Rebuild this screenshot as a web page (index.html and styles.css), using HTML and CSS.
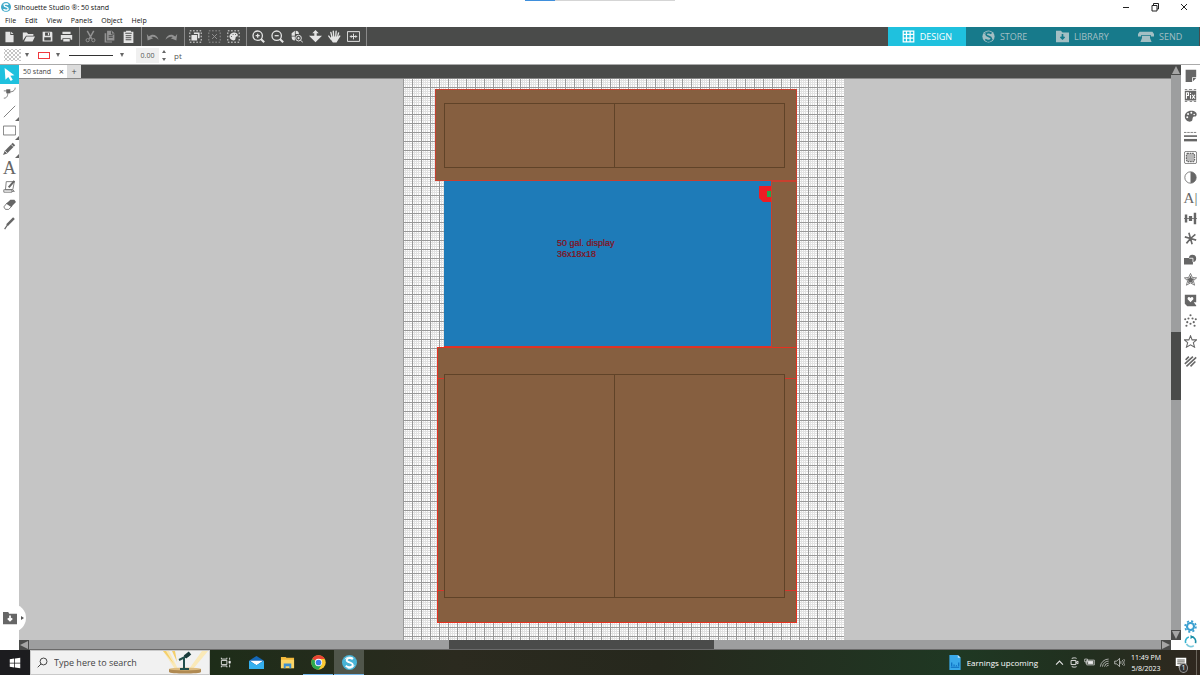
FILE: index.html
```html
<!DOCTYPE html>
<html lang="en">
<head>
  <meta charset="UTF-8">
  <title>Silhouette Studio®: 50 stand</title>
  <link rel="stylesheet" href="styles.css">
</head>
<body>

  <!-- Shared logo -->
  <svg class="defs" width="0" height="0" aria-hidden="true">
    <symbol id="logo" viewBox="0 0 16 16">
      <path d="M11.500 4.500C9.500 2.500 5 3 5 5.500c0 2.700 6.500 2 6.500 5C11.500 13.500 6.500 14 4 11.500" fill="none" stroke-width="2"/>
      <path d="M12 3.500C9 1.500 5 2 3 4.500M13 11c-1 2.500-4 3.500-7 3" fill="none" stroke-width="1"/>
    </symbol>
  </svg>

  <header class="titlebar">
    <svg class="app-logo" viewBox="0 0 16 16"><circle cx="8" cy="8" r="8" fill="#3fa9c9"/><use href="#logo" stroke="#fff"/></svg>
    <h1>Silhouette Studio <sup>®</sup>: 50 stand</h1>
    <div class="load"></div>
    <div class="window-buttons">
      <button aria-label="Minimize"><svg viewBox="0 0 10 10"><path d="M2 5.500h6"/></svg></button>
      <button aria-label="Restore"><svg viewBox="0 0 10 10"><path d="M2 3.500h5V9H2zM3.500 3.500v-2h5V7H7"/></svg></button>
      <button aria-label="Close"><svg viewBox="0 0 10 10"><path d="M2 2l6 6M8 2L2 8"/></svg></button>
    </div>
  </header>

  <nav class="menubar">
    <button>File</button>
    <button>Edit</button>
    <button>View</button>
    <button>Panels</button>
    <button>Object</button>
    <button>Help</button>
  </nav>

  <!-- Main toolbar -->
  <div class="toolbar">
    <div class="group">
      <button aria-label="New"><svg viewBox="0 0 16 16"><path class="f" d="M3 2h6v4h4v9H3zM10 2l3 3h-3z"/></svg></button>
      <button aria-label="Open"><svg viewBox="0 0 16 16"><path class="f" d="M1 13V3h5l1.500 2H14v2H5zM5.500 8H16l-3 6H2.500z"/></svg></button>
      <button aria-label="Save"><svg viewBox="0 0 16 16"><path class="f" fill-rule="evenodd" d="M2 2h11l1 1v11H2zM5 3v4h6V3zM4 9v4h8V9z"/><path class="f" d="M8.500 3.500h1.500v3H8.500z"/></svg></button>
      <button aria-label="Print"><svg viewBox="0 0 16 16"><path class="f" fill-rule="evenodd" d="M3 2h10v3H3zM1 6h14v6h-2v-2H3v2H1zM4 11h8v3H4z"/></svg></button>
    </div>
    <div class="group">
      <button class="dim" aria-label="Cut"><svg viewBox="0 0 16 16"><path d="M4 1l5.500 10M12 1L6.500 11" stroke-width="1.800"/><circle cx="4.500" cy="12.500" r="2"/><circle cx="11.500" cy="12.500" r="2"/></svg></button>
      <button class="dim" aria-label="Copy"><svg viewBox="0 0 16 16"><path class="f" d="M5 1h6l3 3v9H5zM2 4h2v10h7v1.500H2z"/><path d="M7 7h5M7 9h5M10.500 1.500V5H14" stroke="#4a4b4a"/></svg></button>
      <button aria-label="Paste"><svg viewBox="0 0 16 16"><path class="f" d="M2 2h3v-1h6v1h3v14H2z"/><path d="M4 4h8M4.500 7h7M4.500 9.500h7M4.500 12h7" stroke="#4a4b4a"/></svg></button>
    </div>
    <div class="group">
      <button class="dim" aria-label="Undo"><svg viewBox="0 0 16 16"><path class="f" d="M1 5l1 8 7-3-2.500-1C9 7.500 12 9 15.500 12 13.500 6 8 4 3.500 8z"/></svg></button>
      <button class="dim" aria-label="Redo"><svg viewBox="0 0 16 16"><path class="f" d="M15 5l-1 8-7-3 2.500-1C7 7.500 4 9 .5 12 2.500 6 8 4 12.500 8z"/></svg></button>
    </div>
    <div class="group">
      <button aria-label="Select all"><svg viewBox="0 0 16 16"><path d="M1 1h14v14H1z" stroke-dasharray="2 2"/><path class="f" d="M6 3h7v7h-2V5H6zM3 6h7v7H3z"/></svg></button>
      <button class="dim" aria-label="Deselect all"><svg viewBox="0 0 16 16"><path d="M1 1h14v14H1z" stroke-dasharray="2 2"/><path d="M5 5l6 6M11 5l-6 6"/></svg></button>
      <button aria-label="Select by color"><svg viewBox="0 0 16 16"><path d="M1 1h14v14H1z" stroke-dasharray="2 2"/><path class="f" d="M9 3c5 0 5 5 3 5-2 0-1 2-2 4-2 2-7 0-7-4 0-3 3-5 6-5z"/><path d="M5 8h1M7 5.500h1M10 5.500h1" stroke="#4a4b4a"/></svg></button>
    </div>
    <div class="group view">
      <button aria-label="Zoom in"><svg viewBox="0 0 16 16"><g stroke-width="1.600"><circle cx="7" cy="7" r="5.800"/><path d="M4.500 7h5M7 4.500v5"/><path d="M11 11l4 4" stroke-width="2.500"/></g></svg></button>
      <button aria-label="Zoom out"><svg viewBox="0 0 16 16"><g stroke-width="1.600"><circle cx="7" cy="7" r="5.800"/><path d="M4.500 7h5"/><path d="M11 11l4 4" stroke-width="2.500"/></g></svg></button>
      <button aria-label="Drag zoom"><svg viewBox="0 0 16 16"><path class="f" d="M2 7V4l4-3v6zM7 1c3 0 4 2 4 4H7zM2 8h4v5C3 13 2 11 2 8z"/><circle cx="10.500" cy="10" r="3.500"/><path d="M9 10h3M10.500 8.500v3M13 12.500l3 3"/></svg></button>
      <button aria-label="Pan"><svg viewBox="0 0 16 16"><path class="f" d="M8 0l4 4H9.500v3H16l-8 8-8-8h6.500V4H4z"/></svg></button>
      <button aria-label="Hand"><svg viewBox="0 0 16 16"><path d="M5 9L3.500 3M7 8l-.5-6.500M9.500 8l.5-6.500M11.500 9L13 3.500M3.500 11L1 7.500" stroke-width="1.700" stroke-linecap="round"/><path class="f" d="M4 8h8.500l2-1.500 1 1-3 4.500-2 3.500H6L3 11z"/></svg></button>
      <button aria-label="Fit to page"><svg viewBox="0 0 16 16"><path d="M.5 2h15v12H.5zM4 8h8M8 4.500v7M5.500 6.500L4 8l1.500 1.500M10.500 6.500L12 8l-1.500 1.500" /></svg></button>
    </div>
    <nav class="modes">
      <button class="mode current"><svg viewBox="0 0 16 16"><path d="M1.500 1.500h13v13h-13zM5.500 1v14M10 1v14M1 5.500h14M1 10h14" stroke-width="1.500"/></svg>DESIGN</button>
      <button class="mode"><svg viewBox="0 0 16 16"><circle class="f" cx="8" cy="8" r="7.500"/><use href="#logo" stroke="#177a8b"/></svg>STORE</button>
      <button class="mode"><svg viewBox="0 0 16 16"><path class="f" d="M0 1h6l2 2h8v12H0z"/><path d="M8 5v6M5.500 8.500L8 11l2.500-2.500" stroke="#177a8b" stroke-width="2"/></svg>LIBRARY</button>
      <button class="mode wide"><svg viewBox="0 0 20 16"><path class="f" d="M2 2h16l2 3v3h-4V6H4v2H0V5zM5 7h10v3l2 5H3l2-5z"/></svg>SEND</button>
    </nav>
  </div>

  <!-- Fill and line options -->
  <div class="options">
    <button class="drop" aria-label="Fill color">
      <svg width="17" height="12" viewBox="0 0 17 12"><defs><pattern id="hatch" width="4" height="4" patternUnits="userSpaceOnUse"><path d="M0 0l4 4M4 0L0 4" stroke="#c4c4c4" stroke-width="1"/></pattern></defs><rect width="17" height="12" fill="url(#hatch)"/></svg>
      <i></i>
    </button>
    <button class="drop" aria-label="Line color">
      <span class="line-color"></span>
      <i></i>
    </button>
    <button class="drop style" aria-label="Line style">
      <span class="line-style"></span>
      <i></i>
    </button>
    <input class="thickness" id="thickness" type="text" value="0.00">
    <span class="spinner"><b></b><i></i></span>
    <label for="thickness">pt</label>
  </div>

  <main class="main">
    <aside class="tools">
      <div class="tool-list">
        <button class="selected" aria-label="Select"><svg viewBox="0 0 16 16"><path d="M2 0l12 9-5 .5 3 5-2.500 1.500L6.500 11 3 14.500z" fill="#fff"/></svg></button>
        <button aria-label="Edit points"><svg viewBox="0 0 16 16"><path d="M1 15c4 0 5-3 5-8 5 1 9-1 9-5M1 6h5"/><path class="f" d="M4 4h5v5H4z"/></svg></button>
        <button class="more" aria-label="Line"><svg viewBox="0 0 16 16"><path d="M1 15L15 1"/></svg></button>
        <button class="more" aria-label="Rectangle"><svg viewBox="0 0 16 16"><path d="M.5 2.500h15v11H.5z"/></svg></button>
        <button class="more" aria-label="Draw"><svg viewBox="0 0 16 16"><path class="f" d="M0 16l2-5L12 1l3 3L5 14z"/><path d="M2.500 11l3 3M10 3l3 3" stroke="#fff"/></svg></button>
        <button class="letter" aria-label="Text">A</button>
        <button aria-label="Sketch"><svg viewBox="0 0 16 16"><path d="M4 2h10l-2 10H3zM1 12h10v3H1zM12 12l2 2H11"/><path d="M7 9l7-8" stroke-width="2.500"/></svg></button>
        <button aria-label="Eraser"><svg viewBox="0 0 16 16"><path d="M1 11l4-5 6 4-4 4H3z"/><path class="f" d="M4 7l5-5h5l2 3-6 6z"/></svg></button>
        <button aria-label="Knife"><svg viewBox="0 0 16 16"><path d="M2 15l4-6" stroke-width="1.500"/><path d="M5 10l8.500-8.500" stroke-width="3"/></svg></button>
      </div>
    </aside>

    <section class="workspace">
      <div class="tabs">
        <div class="tab">50 stand<button aria-label="Close tab">×</button></div>
        <button class="tab-new" aria-label="New tab">+</button>
      </div>

      <div class="canvas">
        <svg class="page" width="441" height="561" viewBox="0 0 441 561">
          <defs>
            <pattern id="grid" y="8" width="9" height="9" patternUnits="userSpaceOnUse">
              <rect width="9" height="9" fill="#fff"/>
              <path d="M2.500 0v9M4.500 0v9M6.500 0v9M0 2.500h9M0 4.500h9M0 6.500h9" stroke="#e2e2e2"/>
              <path d="M.5 0v9M0 .5h9" stroke="#999"/>
            </pattern>
          </defs>
          <rect width="441" height="561" fill="url(#grid)"/>
          <!-- tank -->
          <rect x="41" y="102" width="327" height="165" fill="#1e7bb8"/>
          <path d="M356 107h12v16h-8l-4-4z" fill="#ed1c24"/>
          <rect x="364" y="112" width="4" height="6" fill="#22a651"/>
          <text x="154" y="167">50 gal. display</text>
          <text x="154" y="178">36x18x18</text>
          <!-- canopy -->
          <rect class="wood" x="368.500" y="102.500" width="25" height="166"/>
          <rect class="wood" x="32.500" y="10.500" width="361" height="91"/>
          <rect class="door" x="41.500" y="24.500" width="340" height="64"/>
          <path class="door" d="M211.500 24v64"/>
          <path class="red" d="M41 267.500h327"/>
          <!-- stand -->
          <rect class="wood strong" x="34.500" y="268.500" width="359" height="275"/>
          <path class="red" d="M35 299.500h6M382 299.500h12M35 511.500h6M382 511.500h12"/>
          <rect class="door" x="41.500" y="295.500" width="340" height="223"/>
          <path class="door" d="M211.500 295v223"/>
        </svg>
        <button class="drawer" aria-label="Library">
          <svg viewBox="0 0 16 16"><path d="M0 1h6l1 2h9v12H0z" fill="#666"/><path d="M8 5v6M5.500 8.500L8 11l2.500-2.500" stroke="#fff" stroke-width="2"/></svg>
          <i></i>
        </button>
      </div>

      <div class="hscroll"><i class="left"></i><div class="thumb"></div><i class="right"></i></div>
    </section>

    <div class="vscroll"><i class="up"></i><div class="thumb"></div><i class="down"></i></div>

    <aside class="panels">
      <div class="panel-list">
        <button aria-label="Page setup"><svg viewBox="0 0 16 16"><path class="f" d="M2 1h13v9h-5v6H2zM11 11h4l-4 4z"/></svg></button>
        <button aria-label="PixScan"><svg viewBox="0 0 16 16"><path class="f" d="M1 2h14v12H1zM1 0h3v1H1zM6 0h4v1H6zM12 0h3v1h-3zM1 15h3v1H1zM7 15h3v1H7zM12 15h3v1h-3z"/><path d="M3 12V4.500h2.500v3.500H3M8 7.500V12M8 4.500v1.500M10 7l3.500 5M13.500 7L10 12" stroke="#fff" stroke-width="1.300"/></svg></button>
        <button aria-label="Fill"><svg viewBox="0 0 16 16"><path class="f" d="M9 1c8 0 8 7 4 7-3 0-2 3-3 5-2 3-9 1-9-5 0-4 3-7 8-7z"/><g fill="#fff" stroke="none"><circle cx="4" cy="9" r="1.200"/><circle cx="5" cy="5" r="1.200"/><circle cx="9" cy="3.500" r="1.200"/><circle cx="12.500" cy="5.500" r="1"/></g></svg></button>
        <button aria-label="Line style"><svg viewBox="0 0 16 16"><path d="M0 3h16" stroke-dasharray="3 1"/><path d="M0 7.500h16" stroke-width="2"/><path d="M0 12.500h16" stroke-width="3"/></svg></button>
        <button aria-label="Trace"><svg viewBox="0 0 16 16"><rect x=".5" y=".5" width="15" height="15" rx="2"/><path d="M4 3h8l1 2v6l-1 2H4l-1-2V5z" fill="#b9b9b9" stroke-width="1.500" stroke-dasharray="2 1"/></svg></button>
        <button aria-label="Image effects"><svg viewBox="0 0 16 16"><circle cx="8" cy="8" r="7"/><path class="f" d="M8 1a7 7 0 0 1 0 14z"/></svg></button>
        <button class="letter small" aria-label="Text style">A|</button>
        <button aria-label="Align"><svg viewBox="0 0 16 16"><path d="M0 8h16"/><path class="f" d="M1 3h3v10H1zM6 5h4v6H6zM12 1h3v14h-3z"/></svg></button>
        <button aria-label="Replicate"><svg viewBox="0 0 16 16"><path d="M8 8L6 1M8 8l6-5M8 8l7 2M8 8l2 7M8 8l-5 6M8 8L1 6" stroke-width="2"/><circle class="f" cx="8" cy="8" r="2"/></svg></button>
        <button aria-label="Modify"><svg viewBox="0 0 16 16"><path class="f" d="M0 6h6a4.500 4.500 0 1 1 5 5v3H0z"/><path d="M6.500 6.500H11V11" stroke="#fff"/></svg></button>
        <button aria-label="Offset"><svg viewBox="0 0 16 16"><path d="M8 .5l2.300 5 5.200.5-4 3.500L13 15l-5-2.800L3 15l1.500-5.500L.5 6l5.200-.5z"/><path class="f" d="M8 3l1.500 3.500 3.500.5-2.500 2.500.5 3.500-3-2-3 2 .5-3.500L3 7l3.500-.5z"/></svg></button>
        <button aria-label="Stipple"><svg viewBox="0 0 16 16"><path class="f" d="M1 1h14v9h-3l3 4v1H4l-3-3z"/><path d="M8 10L4.500 6.500C4 3 7 3 8 5c1-2 4-2 3.500 1.500z" fill="#fff" stroke="none"/></svg></button>
        <button aria-label="Rhinestones"><svg viewBox="0 0 16 16"><g class="f"><circle cx="8" cy="1.500" r="1.300"/><circle cx="5.500" cy="5.500" r="1.300"/><circle cx="10.500" cy="5.500" r="1.300"/><circle cx="1.500" cy="6.500" r="1.300"/><circle cx="14.500" cy="6.500" r="1.300"/><circle cx="4" cy="10" r="1.300"/><circle cx="12" cy="10" r="1.300"/><circle cx="8" cy="12" r="1.300"/><circle cx="3" cy="14.500" r="1.300"/><circle cx="13" cy="14.500" r="1.300"/></g></svg></button>
        <button aria-label="Sketch"><svg viewBox="0 0 16 16"><path d="M8 1l2 5h5.500l-4 3.500 1.500 5.500-5-3-5 3 1.500-5.500L.5 6H6z" stroke-width="1.300"/></svg></button>
        <button aria-label="Hatch"><svg viewBox="0 0 16 16"><path d="M2 6l4-4M1 11l10-9M3 14L15 3M8 14l6-6" stroke-width="1.900"/></svg></button>
      </div>
      <div class="panel-foot">
        <button aria-label="Preferences"><svg viewBox="0 0 16 16"><circle cx="8" cy="8" r="4.300" stroke="#3a9fd0" stroke-width="2.600"/><circle cx="8" cy="8" r="6.700" stroke="#3a9fd0" stroke-width="2" stroke-dasharray="2.600 2.660"/></svg></button>
        <button aria-label="Sync"><svg viewBox="0 0 16 16"><path d="M9 2a6 6 0 0 1 5 8" stroke="#1b8fa8" stroke-width="2"/><path d="M12 13a6 6 0 0 1-9-2" stroke="#7cc9dc" stroke-width="2"/><path d="M2 10a6 6 0 0 1 4-7.500" stroke="#35b3d0" stroke-width="2"/><path d="M8 0l4 2.500L8 5z" fill="#1b8fa8" stroke="none"/></svg></button>
      </div>
    </aside>
  </main>

  <footer class="taskbar">
    <button class="start" aria-label="Start"><svg viewBox="0 0 16 16"><path d="M1 3l6-1v5.500H1zM8 2l7-1v6.500H8zM1 8.500h6V14l-6-1zM8 8.500h7V15l-7-1z" fill="#fff"/></svg></button>
    <label class="search">
      <svg class="lens" viewBox="0 0 16 16"><circle cx="9.500" cy="6.500" r="5"/><path d="M6 10l-5 5"/></svg>
      <input type="text" placeholder="Type here to search" aria-label="Search">
      <svg class="doodle" width="46" height="23" viewBox="0 0 46 23">
        <path d="M0 0h6l9 18h-3zM39 0h6L30 18h-4z" fill="#fae9b8"/><path d="M0 0h3l8 13zM9 0h3l2 11z" fill="#f4cf6a"/>
        <path d="M6 18h32v3c0 2-32 2-32 0z" fill="#b08a52"/><ellipse cx="22" cy="18" rx="16" ry="1.500" fill="#dfbd82"/>
        <path d="M16 9l10-5M21 6v12M17 18h9" stroke="#214f4c" stroke-width="2" fill="none"/><path d="M22 6l5-4" stroke="#183a3a" stroke-width="4"/>
      </svg>
    </label>
    <div class="apps">
      <button aria-label="Task view"><svg viewBox="0 0 16 16" stroke="#e8e8e8" fill="none"><path d="M2 5h8v6H2zM2 1v2h8V1M2 15v-2h8v2M14 1v3M14 11v4" stroke-width="1.300"/><path d="M13 6h2v3h-2z" fill="#fff"/></svg></button>
      <button aria-label="Mail"><svg viewBox="0 0 16 16"><path d="M0 6l8-5 8 5v9H0z" fill="#1468b8"/><path d="M1 6h14l-7 5z" fill="#fff"/><path d="M0 6l8 5 8-5v9H0z" fill="#35b0ee"/></svg></button>
      <button aria-label="File Explorer"><svg viewBox="0 0 16 16"><path d="M1 2h5l1 1h8v11H1z" fill="#f3b93b"/><path d="M1 5h14v9H1z" fill="#fcd667"/><path d="M4 14V9h8v5h-2v-2H6v2z" fill="#3f91d0"/></svg></button>
      <button class="open" aria-label="Chrome"><svg viewBox="0 0 16 16"><circle cx="8" cy="8" r="7.700" fill="#fcc934"/><path d="M8 8L1.300 4.200A7.700 7.700 0 0 1 14.700 4.200H8z" fill="#ea4335"/><path d="M8 8L1.300 4.200A7.700 7.700 0 0 0 8 15.700L11.500 10z" fill="#2da94f"/><circle cx="8" cy="8" r="3.900" fill="#fff"/><circle cx="8" cy="8" r="3" fill="#3b7ded"/></svg></button>
      <button class="open focused" aria-label="Silhouette Studio"><svg viewBox="0 0 16 16"><circle cx="8" cy="8" r="8" fill="#48b4d6"/><use href="#logo" stroke="#fff"/></svg></button>
    </div>
    <button class="news">
      <svg viewBox="0 0 12 16"><path d="M0 0h9l3 3v13H0z" fill="#39a9ea"/><path d="M9 0l3 3H9z" fill="#bfe6ff"/><path d="M2.500 12V8M5 12v-2M7.500 12v-1M10 12V8M1.500 13h9" stroke="#0b6cc0" stroke-width="1.200"/></svg>
      Earnings upcoming
    </button>
    <div class="tray">
      <button aria-label="Show hidden icons"><svg viewBox="0 0 16 16"><path d="M3 11l5-5 5 5" stroke-width="1.600"/></svg></button>
      <button aria-label="Meet now"><svg viewBox="0 0 16 16"><path d="M3 5h7v6H3zM10 8l3-2v4zM4 2c3-1 5-1 7 0M4 14c3 1 5 1 7 0" stroke-width="1.400"/></svg></button>
      <button aria-label="Battery"><svg viewBox="0 0 16 16"><path d="M4 4.500h11v7H4zM1 3v4h4V3zM3 7v3"/><path d="M6 6h7v4H6z" fill="#eee"/></svg></button>
      <button aria-label="Network"><svg viewBox="0 0 16 16"><path d="M2 14A12 12 0 0 1 14 3M5 14a9 9 0 0 1 9-8M8 14a6 6 0 0 1 6-5M11 14a3 3 0 0 1 3-2"/></svg></button>
      <button aria-label="Volume"><svg viewBox="0 0 16 16"><path d="M1 6h3l4-4v12l-4-4H1zM10 6v4M12 4.500c2 2 2 5 0 7M14 3c3 3 3 7 0 10"/></svg></button>
    </div>
    <div class="clock"><time>11:49 PM</time><time>5/8/2023</time></div>
    <button class="notify" aria-label="1 new notification">
      <svg viewBox="0 0 16 16"><path d="M1 1h14v11H8l-3 3v-3H1z" fill="#fff"/><path d="M3 4h10M3 6.500h10M3 9h6" stroke="#2b2a22"/></svg>
      <span>1</span>
    </button>
  </footer>

</body>
</html>
```
FILE: styles.css
```css
* {
  box-sizing: border-box;
}
body {
  margin: 0;
  height: 100vh;
  display: flex;
  flex-direction: column;
  overflow: hidden;
  background: #fff;
  color: #111;
  font-family: "Open Sans", "Noto Sans", sans-serif;
  font-size: 7px;
}
button, input {
  margin: 0;
  padding: 0;
  border: none;
  background: none;
  color: inherit;
  font: inherit;
}
button {
  display: flex;
  align-items: center;
  justify-content: center;
}
svg {
  display: block;
  flex: none;
}
.defs {
  position: absolute;
}

/* Title and menus */
.titlebar {
  position: relative;
  display: flex;
  align-items: center;
  height: 14px;
  padding: 0 2px 0 1px;
}
.app-logo {
  width: 10px;
  height: 10px;
}
.titlebar h1 {
  margin: 0 auto 0 3px;
  font-size: 7px;
  font-weight: 400;
}
.titlebar sup {
  font-size: 7px;
  line-height: 1;
  vertical-align: baseline;
}
.load {
  position: absolute;
  top: 0;
  left: 525px;
  width: 150px;
  height: 1px;
  background: linear-gradient(to right, #3f8fdc 30px, #d5d5d5 30px);
}
.window-buttons {
  display: flex;
}
.window-buttons button {
  width: 29px;
  height: 12px;
}
.window-buttons svg {
  width: 10px;
  height: 10px;
  fill: none;
  stroke: #222;
}
.menubar {
  display: flex;
  gap: 9px;
  height: 13px;
  padding-left: 5px;
}

/* Toolbar */
.toolbar {
  display: flex;
  height: 19px;
  padding-right: 1px;
  background: #4a4b4a;
}
.group {
  display: flex;
  padding: 0 3px 0 1px;
  border-right: 1px solid #8a8a8a;
}
.group:first-child {
  padding-left: 0;
}
.group.view {
  padding-left: 2px;
}
.group button {
  width: 19px;
}
.group svg {
  width: 13px;
  height: 13px;
  fill: none;
  stroke: #e4e4e4;
  stroke-width: 1.2;
}
.group .f {
  fill: #e4e4e4;
  stroke: none;
}
.group .dim svg {
  stroke: #929292;
}
.group .dim .f {
  fill: #929292;
}
.modes {
  display: flex;
  width: 311px;
  margin-left: auto;
  background: #177a8b;
}
.mode {
  flex: 1;
  gap: 5px;
  color: #a3bfc4;
  font-size: 9px;
}
.mode svg {
  width: 13px;
  height: 13px;
  fill: none;
  stroke: #fff;
}
.mode .f {
  fill: #a3bfc4;
  stroke: none;
}
.mode.wide svg {
  width: 16px;
}
.mode.current {
  background: #1fc1de;
  color: #fff;
}

/* Line options */
.options {
  display: flex;
  align-items: center;
  height: 19px;
  padding-left: 4px;
  border-bottom: 1px solid #aaa;
  color: #555;
}
.options label {
  font-size: 8px;
}
.drop {
  gap: 4px;
  margin-right: 9px;
}
.drop i, .spinner i {
  border: 2px solid transparent;
  border-top: 4px solid #666;
  border-bottom: 0;
}
.drop.style {
  gap: 7px;
  margin-right: 12px;
}
.line-color {
  width: 12px;
  height: 7px;
  margin-right: 2px;
  border: 1px solid #f0383d;
}
.line-style {
  width: 44px;
  height: 1px;
  background: #333;
}
.thickness {
  width: 23px;
  height: 15px;
  background: #f0f0f0;
  text-align: center;
}
.spinner {
  display: flex;
  flex-direction: column;
  gap: 5px;
  margin: 0 8px 0 3px;
}
.spinner b {
  border: 2px solid transparent;
  border-bottom: 3px solid #666;
  border-top: 0;
}
.spinner i {
  border-top-width: 3px;
}

/* Main area */
.main {
  display: flex;
  flex: 1;
  min-height: 0;
}
.tools, .panels {
  display: flex;
  flex-direction: column;
  width: 19px;
}
.tool-list {
  display: grid;
  grid-auto-rows: 1fr;
  height: 168px;
}
.panel-list {
  display: grid;
  grid-auto-rows: 1fr;
  height: 307px;
}
.tools svg, .panels svg {
  width: 13px;
  height: 13px;
  fill: none;
  stroke: #666;
}
.tools .f, .panels .f {
  fill: #666;
  stroke: none;
}
.selected {
  background: #1fc1de;
}
.tools .selected svg {
  stroke: none;
}
.more {
  position: relative;
}
.more::after {
  content: "";
  position: absolute;
  right: 0;
  bottom: 0;
  border: 2px solid #666;
  border-top-color: transparent;
  border-left-color: transparent;
}
.letter {
  color: #666;
  font-family: "Liberation Serif", serif;
  font-size: 18px;
  line-height: 1;
}
.letter.small {
  font-size: 15px;
}
.workspace {
  display: flex;
  flex: 1;
  flex-direction: column;
  min-width: 0;
}
.tabs {
  display: flex;
  height: 14px;
  background: #4a4b4a;
  border-bottom: 1px solid #888;
  color: #444;
}
.tab {
  display: flex;
  align-items: center;
  justify-content: space-between;
  width: 48px;
  padding: 0 3px 0 4px;
  background: #fff;
}
.tab button {
  font-size: 9px;
}
.tab-new {
  width: 14px;
  background: #dcdcdc;
  font-size: 9px;
}
.canvas {
  position: relative;
  flex: 1;
  min-height: 0;
  background: #c5c5c5;
}
.page {
  position: absolute;
  top: 0;
  left: 384px;
}
.page text {
  fill: #860d17;
  stroke: #860d17;
  stroke-width: 0.2;
  font-family: "Liberation Sans", Arial, sans-serif;
  font-size: 9px;
}
.wood {
  fill: #865f40;
  stroke: #c8402f;
}
.wood.strong {
  stroke: #e8301f;
}
.door {
  fill: none;
  stroke: #604328;
}
.red {
  stroke: #d8352b;
}
.drawer {
  position: absolute;
  left: -19px;
  bottom: 8px;
  width: 26px;
  height: 28px;
  gap: 4px;
  border-radius: 0 14px 14px 0;
  background: #fff;
}
.drawer svg {
  width: 14px;
  height: 14px;
  fill: none;
}
.drawer i {
  border: 2px solid transparent;
  border-left: 3px solid #555;
  border-right: 0;
}

/* Scroll bars */
.hscroll, .vscroll {
  display: flex;
  background: #9d9e9f;
}
.hscroll {
  height: 10px;
  border-bottom: 1px solid #6a6a6a;
}
.vscroll {
  flex-direction: column;
  width: 10px;
  margin-bottom: 10px;
}
.hscroll i, .vscroll i {
  flex: none;
  width: 10px;
  height: 10px;
  padding: 1px;
  background: #4a4b4a;
}
.hscroll i::before, .vscroll i::before {
  content: "";
  display: block;
  height: 8px;
  background: #a5a5a5;
}
.hscroll .left::before {
  clip-path: polygon(0 50%, 100% 0, 100% 100%);
}
.hscroll .right::before {
  clip-path: polygon(100% 50%, 0 0, 0 100%);
}
.vscroll .up::before {
  clip-path: polygon(50% 0, 100% 100%, 0 100%);
}
.vscroll .down::before {
  clip-path: polygon(50% 100%, 100% 0, 0 0);
}
.hscroll .thumb {
  width: 23%;
  margin: 0 auto 0 36.5%;
  background: #4a4b4a;
}
.vscroll .thumb {
  flex: none;
  height: 68px;
  margin: auto 0;
  transform: translateY(13px);
  background: #4a4b4a;
}

.panel-foot {
  display: flex;
  flex-direction: column;
  gap: 2px;
  margin-top: auto;
  padding-bottom: 2px;
}

/* Windows taskbar */
.taskbar {
  display: flex;
  height: 25px;
  background: linear-gradient(to right, #1c1c1f 2%, #1e2d19 18%, #2b2a1f 38%, #26281d 55%, #1f3823 80%, #21301f 90%, #30271f 100%);
  color: #fff;
}
.start {
  width: 30px;
}
.start svg {
  width: 12px;
  height: 12px;
}
.search {
  display: flex;
  align-items: center;
  width: 180px;
  border: 1px solid #c9c9c9;
  background: #f1f1f1;
}
.search input {
  flex: 1;
  min-width: 0;
  color: #444;
  font-size: 9px;
}
.search input::placeholder {
  color: #444;
}
.lens {
  width: 11px;
  height: 11px;
  margin: 0 6px;
  fill: none;
  stroke: #333;
  stroke-width: 1.3;
}
.apps {
  display: flex;
  gap: 1px;
}
.apps button {
  width: 30px;
  border-bottom: 1px solid transparent;
}
.apps svg {
  width: 15px;
  height: 15px;
}
.apps button:first-child svg {
  width: 11px;
  height: 11px;
}
.apps .open {
  border-bottom-color: #76b9ed;
}
.apps .focused {
  background: #50564b;
}
.news {
  gap: 6px;
  margin-left: auto;
  font-size: 8px;
}
.news svg {
  width: 12px;
  height: 15px;
}
.tray {
  display: flex;
  margin-left: 14px;
}
.tray button {
  width: 15px;
}
.tray svg {
  width: 11px;
  height: 11px;
  fill: none;
  stroke: #e4e4e4;
}
.clock {
  display: flex;
  flex-direction: column;
  align-items: center;
  justify-content: center;
  width: 38px;
  line-height: 11px;
}
.notify {
  position: relative;
  width: 32px;
  margin-right: 3px;
  border-right: 1px solid #6b655c;
}
.notify svg {
  width: 12px;
  height: 12px;
}
.notify span {
  position: absolute;
  right: 8px;
  bottom: 2px;
  width: 9px;
  border: 1px solid #999;
  border-radius: 50%;
  background: #333;
  line-height: 8px;
}
```
